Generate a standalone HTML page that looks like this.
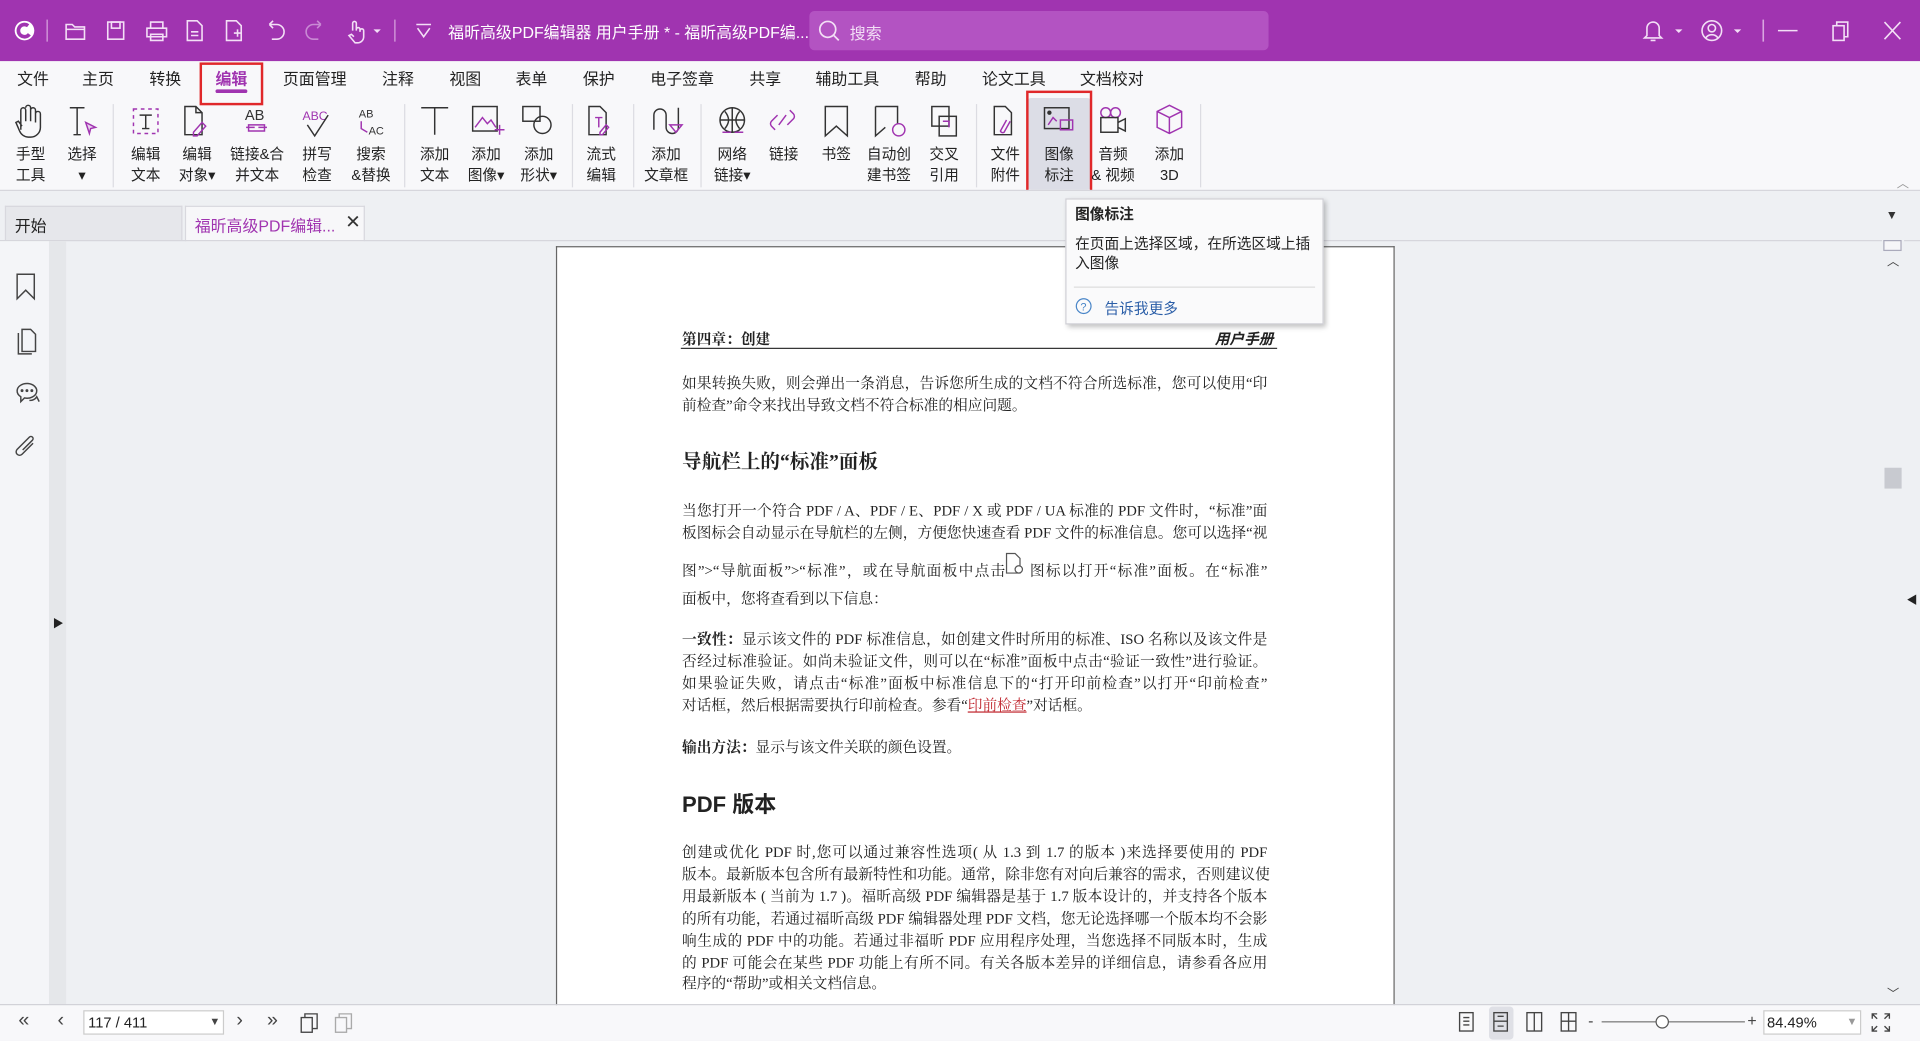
<!DOCTYPE html>
<html><head><meta charset="utf-8">
<style>
*{margin:0;padding:0;box-sizing:border-box}
html,body{width:1920px;height:1041px;overflow:hidden;background:#eef0f3}
#w{position:absolute;left:0;top:0;width:1568px;height:850px;transform:scale(1.22449);transform-origin:0 0;font-family:"Liberation Sans","Noto Sans CJK SC",sans-serif;color:#222;font-size:12px}
.a{position:absolute}
.t{position:absolute;white-space:nowrap}
svg{position:absolute;overflow:visible}
.rb{position:absolute;top:84px;width:50px;text-align:center;font-size:12px;line-height:17px;color:#222}
.rb .ic{height:32px;position:relative}
.rb .lb{margin-top:2px}
.sep{position:absolute;top:85px;width:1px;height:68px;background:#dcdce2}
.ln{position:absolute;left:557px;width:478px;height:18px;line-height:18px;font-size:12px;font-family:"Liberation Serif","Noto Serif CJK SC",serif;text-align:justify;text-align-last:justify;white-space:nowrap;color:#222}
.ln.l{text-align-last:left}
.mn{position:absolute;top:54px;font-size:13px;color:#222}
</style></head><body><div id="w">
<div class="a" style="left:0;top:0;width:1568px;height:50px;background:#a034b0"></div>
<svg style="left:10px;top:15px" width="20" height="20" viewBox="0 0 20 20"><circle cx="10" cy="10" r="8" fill="#fff"/><path d="M13 6a5 5 0 1 0 1 7" stroke="#a034b0" stroke-width="3" fill="none"/></svg>
<div class="a" style="left:38px;top:16px;width:1px;height:18px;background:#d9a6e0"></div>
<svg style="left:52px;top:15px" width="300" height="20" fill="none" stroke="#f3dff6" stroke-width="1.3">
<path d="M2 5h5l2 2h8v10H2z M2 9h15"/>
<rect x="36" y="3" width="13" height="14"/><rect x="39" y="3" width="7" height="5"/>
<path d="M68 8h16v7H68z M71 8V3h10v5 M71 13h10v5H71z"/>
<path d="M101 2h8l4 4v12h-12z M104 11h6 M104 14h6"/>
<path d="M133 2h8l4 4v12h-12z M139 12h6 M142 9v6"/>
<path d="M168 5h6a6 6 0 0 1 0 12h-4 M168 5l3-3 M168 5l3 3"/>
<path d="M210 5h-6a6 6 0 0 0 0 12h4 M210 5l-3-3 M210 5l-3 3" stroke="#c98ad4"/>
<path d="M236 10V4a1.5 1.5 0 0 1 3 0v6 M239 9a1.5 1.5 0 0 1 3 0v2 M242 10a1.5 1.5 0 0 1 3 0v5a5 5 0 0 1-5 5h-2l-5-6 2-1 2 2"/>
<path d="M253 9l3 3 3-3" fill="#f3dff6" stroke="none"/>
</svg>
<div class="a" style="left:322px;top:16px;width:1px;height:18px;background:#d9a6e0"></div>
<svg style="left:338px;top:17px" width="16" height="16" fill="none" stroke="#f3dff6" stroke-width="1.3"><path d="M2 3h12 M3 6l5 7 5-7"/></svg>
<div class="t" style="left:366px;top:16px;font-size:13px;color:#fff">福昕高级PDF编辑器 用户手册 * - 福昕高级PDF编...</div>
<div class="a" style="left:661px;top:9px;width:375px;height:32px;border-radius:4px;background:#b353c2"></div>
<svg style="left:668px;top:16px" width="18" height="18" fill="none" stroke="#f3dff6" stroke-width="1.4"><circle cx="8" cy="8" r="6.5"/><path d="M13 13l4 4"/></svg>
<div class="t" style="left:694px;top:17px;font-size:13px;color:#f3dff6">搜索</div>
<svg style="left:1340px;top:14px" width="230" height="22" fill="none" stroke="#f3dff6" stroke-width="1.3">
<path d="M5 15V9a5 5 0 0 1 10 0v6l2 2H3z M8 19h4"/><path d="M28 10l3 3 3-3" fill="#f3dff6" stroke="none"/>
<circle cx="58" cy="11" r="8"/><circle cx="58" cy="9" r="3"/><path d="M53 17a6 6 0 0 1 10 0"/><path d="M76 10l3 3 3-3" fill="#f3dff6" stroke="none"/>
<path d="M100 2v18" stroke="#d9a6e0"/>
<path d="M112 11h16"/>
<rect x="157" y="7" width="9" height="12"/><path d="M160 7V4h9v12h-3"/>
<path d="M199 4l13 14 M212 4l-13 14"/>
</svg>
<div class="a" style="left:0;top:50px;width:1568px;height:105px;background:#f8f8fa"></div>
<div class="mn" style="left:14px">文件</div><div class="mn" style="left:67px">主页</div><div class="mn" style="left:122px">转换</div>
<div class="mn" style="left:176px;color:#a034b0;font-weight:bold">编辑</div>
<div class="a" style="left:176px;top:73px;width:26px;height:3px;border-radius:2px;background:#a034b0"></div>
<div class="a" style="left:163px;top:51px;width:52px;height:35px;border:2px solid #e0282a"></div>
<div class="mn" style="left:231px">页面管理</div><div class="mn" style="left:312px">注释</div><div class="mn" style="left:367px">视图</div><div class="mn" style="left:421px">表单</div><div class="mn" style="left:476px">保护</div><div class="mn" style="left:531px">电子签章</div><div class="mn" style="left:612px">共享</div><div class="mn" style="left:666px">辅助工具</div><div class="mn" style="left:747px">帮助</div><div class="mn" style="left:802px">论文工具</div><div class="mn" style="left:882px">文档校对</div>
<div class="a" style="left:839px;top:80px;width:52px;height:75px;background:#dcdde6;border-radius:3px"></div>
<div class="a" style="left:838px;top:74px;width:54px;height:86px;border:2px solid #e0282a"></div>
<div class="sep" style="left:92px"></div><div class="sep" style="left:330px"></div><div class="sep" style="left:467px"></div><div class="sep" style="left:517px"></div><div class="sep" style="left:572px"></div><div class="sep" style="left:797px"></div><div class="sep" style="left:980px"></div>
<svg style="left:0;top:84px" width="1000" height="34" fill="none" stroke="#333" stroke-width="1.2">
<path d="M17 22V6a2 2 0 0 1 4 0v9 M21 4a2 2 0 0 1 4 0v11 M25 6a2 2 0 0 1 4 0v10 M29 9a2 2 0 0 1 4 0v11a8 8 0 0 1-8 8h-2a8 8 0 0 1-7-5l-3-7 2-1 3 4"/>
<path d="M57 4h12 M63 4v22 M60 26h6"/><path d="M70 16l8 4-4 1-1 4z" stroke="#a034b0" fill="#e8d0ee"/>
<rect x="109" y="5" width="20" height="20" stroke="#a034b0" stroke-dasharray="3 3"/><path d="M114 10h10 M119 10v11 M116 21h6"/>
<path d="M151 3h9l5 5v18h-14z M160 3v5h5"/><path d="M158 24l7-8 3 3-7 8h-3z" stroke="#a034b0"/>
<text x="200" y="14" font-size="12" fill="#333" stroke="none" font-family="Liberation Sans">AB</text><path d="M201 20h7 M211 20h7 M203 18h13v5H203z" stroke="#a034b0"/>
<text x="247" y="14" font-size="10" fill="#a034b0" stroke="none" font-family="Liberation Sans">ABC</text><path d="M251 18l6 9 11-17"/>
<text x="293" y="12" font-size="9" fill="#333" stroke="none" font-family="Liberation Sans">AB</text><text x="301" y="26" font-size="9" fill="#333" stroke="none" font-family="Liberation Sans">AC</text><path d="M295 15v6l5 3" stroke="#a034b0"/>
<path d="M344 4h22 M355 4v22"/>
<rect x="386" y="3" width="20" height="20"/><path d="M388 20l6-8 4 5 3-3 4 6" stroke="#a034b0"/><path d="M404 22h8 M408 18v8" stroke="#a034b0"/>
<rect x="427" y="3" width="14" height="12"/><circle cx="443" cy="18" r="7"/>
<path d="M481 3h9l5 5v18h-14z"/><path d="M486 12h6 M489 12v8" stroke="#a034b0"/><path d="M490 24l5-6 2 2-5 6h-2z" stroke="#a034b0"/>
<path d="M534 22V10a5 5 0 0 1 10 0v10 M544 20a5 5 0 0 0 10 0V4"/><path d="M547 18h10l-5 6z" stroke="#a034b0"/>
<circle cx="598" cy="14" r="10"/><path d="M588 14h20 M598 4v20 M592 7c4 5 4 9 0 14 M604 7c-4 5-4 9 0 14"/><path d="M590 24h7 M600 24h7" stroke="#a034b0"/>
<path d="M633 22l-3-3a3 3 0 0 1 0-4l5-5 M645 6l3 3a3 3 0 0 1 0 4l-5 5 M636 18l6-8" stroke="#a034b0"/>
<path d="M674 3h18v24l-9-8-9 8z"/>
<path d="M715 3h18v14 M715 3v24l8-7"/><circle cx="734" cy="22" r="5" stroke="#a034b0"/>
<rect x="761" y="3" width="14" height="16"/><rect x="767" y="11" width="14" height="16"/><path d="M770 15h5v5" stroke="#a034b0"/>
<path d="M812 3h9l5 5v18h-14z"/><path d="M822 14l-5 9a2 2 0 0 0 3 1l5-9" stroke="#a034b0"/>
<rect x="853" y="4" width="20" height="17"/><circle cx="857" cy="8" r="1.2" fill="#333"/><path d="M856 18l4-6 3 3" stroke="#a034b0"/><rect x="866" y="14" width="10" height="8" stroke="#a034b0"/>
<circle cx="903" cy="8" r="4" stroke="#a034b0"/><circle cx="911" cy="8" r="4" stroke="#a034b0"/><rect x="899" y="12" width="14" height="12"/><path d="M913 16l6-3v10l-6-3"/>
<path d="M955 2l10 5v13l-10 5-10-5V7z M945 7l10 5 10-5 M955 12v13" stroke="#a034b0"/>
</svg>
<div class="rb" style="left:0px"><div class="ic"></div><div class="lb">手型<br>工具</div></div>
<div class="rb" style="left:42px"><div class="ic"></div><div class="lb">选择<br>▾</div></div>
<div class="rb" style="left:94px"><div class="ic"></div><div class="lb">编辑<br>文本</div></div>
<div class="rb" style="left:136px"><div class="ic"></div><div class="lb">编辑<br>对象▾</div></div>
<div class="rb" style="left:180px;width:60px"><div class="ic"></div><div class="lb">链接&amp;合<br>并文本</div></div>
<div class="rb" style="left:234px"><div class="ic"></div><div class="lb">拼写<br>检查</div></div>
<div class="rb" style="left:278px"><div class="ic"></div><div class="lb">搜索<br>&amp;替换</div></div>
<div class="rb" style="left:330px"><div class="ic"></div><div class="lb">添加<br>文本</div></div>
<div class="rb" style="left:372px"><div class="ic"></div><div class="lb">添加<br>图像▾</div></div>
<div class="rb" style="left:415px"><div class="ic"></div><div class="lb">添加<br>形状▾</div></div>
<div class="rb" style="left:466px"><div class="ic"></div><div class="lb">流式<br>编辑</div></div>
<div class="rb" style="left:519px"><div class="ic"></div><div class="lb">添加<br>文章框</div></div>
<div class="rb" style="left:573px"><div class="ic"></div><div class="lb">网络<br>链接▾</div></div>
<div class="rb" style="left:615px"><div class="ic"></div><div class="lb">链接<br>&nbsp;</div></div>
<div class="rb" style="left:658px"><div class="ic"></div><div class="lb">书签<br>&nbsp;</div></div>
<div class="rb" style="left:699px;width:54px"><div class="ic"></div><div class="lb">自动创<br>建书签</div></div>
<div class="rb" style="left:746px"><div class="ic"></div><div class="lb">交叉<br>引用</div></div>
<div class="rb" style="left:796px"><div class="ic"></div><div class="lb">文件<br>附件</div></div>
<div class="rb" style="left:840px"><div class="ic"></div><div class="lb">图像<br>标注</div></div>
<div class="rb" style="left:884px"><div class="ic"></div><div class="lb">音频<br>&amp; 视频</div></div>
<div class="rb" style="left:930px"><div class="ic"></div><div class="lb">添加<br>3D</div></div>
<div class="t" style="left:1549px;top:141px;font-size:10px;color:#999">︿</div>
<div class="a" style="left:0;top:155px;width:1568px;height:1px;background:#d6d6dc"></div>
<div class="a" style="left:0;top:156px;width:1568px;height:40px;background:#eef0f3"></div>
<div class="a" style="left:4px;top:168px;width:145px;height:28px;background:#e6e7eb;border:1px solid #d8d8de;border-bottom:none"></div>
<div class="t" style="left:12px;top:174px;font-size:13px">开始</div>
<div class="a" style="left:151px;top:168px;width:147px;height:29px;background:#f7f7f9;border:1px solid #d8d8de;border-bottom:none"></div>
<div class="t" style="left:159px;top:174px;font-size:13px;color:#a034b0">福昕高级PDF编辑...</div>
<div class="t" style="left:282px;top:172px;font-size:15px;color:#333">✕</div>
<div class="t" style="left:1540px;top:171px;font-size:10px;color:#333">▼</div>
<div class="a" style="left:0;top:196px;width:1568px;height:1px;background:#d6d6dc"></div>
<div class="a" style="left:0;top:197px;width:40px;height:623px;background:#f4f5f8"></div>
<div class="a" style="left:40px;top:197px;width:14px;height:623px;background:#e5e7ea"></div>
<svg style="left:12px;top:222px" width="22" height="160" fill="none" stroke="#444" stroke-width="1.2">
<path d="M2 2h14v20l-7-7-7 7z"/>
<path d="M6 47h7l4 4v14H6z M3 50v17h11"/>
<path d="M2 97a8 6 0 1 1 6 6l-3 3v-4a8 6 0 0 1-3-5z M12 105a6 5 0 0 0 6-3l2 4"/><circle cx="6" cy="97" r=".6" fill="#444"/><circle cx="10" cy="97" r=".6" fill="#444"/><circle cx="14" cy="97" r=".6" fill="#444"/>
<path d="M15 140l-9 9a2.5 2.5 0 0 1-4-4l10-10a1.7 1.7 0 0 1 2.5 2.5l-8 8"/>
</svg>
<div class="t" style="left:43px;top:502px;font-size:9px;color:#222">▶</div>
<div class="a" style="left:454px;top:201px;width:685px;height:620px;background:#fff;border:1px solid #666;border-bottom:none"></div>
<div class="t" style="left:557px;top:268px;font-size:12px;font-weight:bold;font-family:'Liberation Serif','Noto Serif CJK SC',serif">第四章：创建</div>
<div class="t" style="left:992px;top:268px;font-size:12px;font-weight:bold;font-style:italic">用户手册</div>
<div class="a" style="left:556px;top:284px;width:487px;height:1px;background:#333"></div>
<div class="ln" style="top:304px">如果转换失败，则会弹出一条消息，告诉您所生成的文档不符合所选标准，您可以使用“印</div>
<div class="ln l" style="top:322px">前检查”命令来找出导致文档不符合标准的相应问题。</div>
<div class="t" style="left:557px;top:364px;font-size:16px;font-weight:bold;font-family:'Liberation Serif','Noto Serif CJK SC',serif">导航栏上的“标准”面板</div>
<div class="ln" style="top:408px">当您打开一个符合 PDF / A、PDF / E、PDF / X 或 PDF / UA 标准的 PDF 文件时，“标准”面</div>
<div class="ln" style="top:426px">板图标会自动显示在导航栏的左侧，方便您快速查看 PDF 文件的标准信息。您可以选择“视</div>
<div class="ln" style="top:457px">图”&gt;“导航面板”&gt;“标准”，或在导航面板中点击<span style="display:inline-block;width:18px"></span>图标以打开“标准”面板。在“标准”</div>
<svg style="left:820px;top:451px" width="18" height="20" fill="none" stroke="#555" stroke-width="1"><path d="M2 1h7l4 4v12H2z"/><circle cx="12" cy="14" r="3" fill="#fff"/></svg>
<div class="ln l" style="top:480px">面板中，您将查看到以下信息：</div>
<div class="ln" style="top:513px"><b>一致性：</b>显示该文件的 PDF 标准信息，如创建文件时所用的标准、ISO 名称以及该文件是</div>
<div class="ln" style="top:531px">否经过标准验证。如尚未验证文件，则可以在“标准”面板中点击“验证一致性”进行验证。</div>
<div class="ln" style="top:549px">如果验证失败，请点击“标准”面板中标准信息下的“打开印前检查”以打开“印前检查”</div>
<div class="ln l" style="top:567px">对话框，然后根据需要执行印前检查。参看“<span style="color:#c0262e;text-decoration:underline">印前检查</span>”对话框。</div>
<div class="ln l" style="top:601px"><b>输出方法：</b>显示与该文件关联的颜色设置。</div>
<div class="t" style="left:557px;top:643px;font-size:18px;font-weight:bold;font-family:'Liberation Sans','Noto Sans CJK SC',sans-serif">PDF 版本</div>
<div class="ln" style="top:687px">创建或优化 PDF 时,您可以通过兼容性选项( 从 1.3 到 1.7 的版本 )来选择要使用的 PDF</div>
<div class="ln" style="top:705px">版本。最新版本包含所有最新特性和功能。通常，除非您有对向后兼容的需求，否则建议使</div>
<div class="ln" style="top:723px">用最新版本 ( 当前为 1.7 )。福昕高级 PDF 编辑器是基于 1.7 版本设计的，并支持各个版本</div>
<div class="ln" style="top:741px">的所有功能，若通过福昕高级 PDF 编辑器处理 PDF 文档，您无论选择哪一个版本均不会影</div>
<div class="ln" style="top:759px">响生成的 PDF 中的功能。若通过非福昕 PDF 应用程序处理，当您选择不同版本时，生成</div>
<div class="ln" style="top:777px">的 PDF 可能会在某些 PDF 功能上有所不同。有关各版本差异的详细信息，请参看各应用</div>
<div class="ln l" style="top:794px">程序的“帮助”或相关文档信息。</div>
<div class="a" style="left:870px;top:162px;width:211px;height:103px;background:#fafafb;border:1px solid #d0d0d6;box-shadow:2px 2px 4px rgba(0,0,0,.25)"></div>
<div class="t" style="left:878px;top:166px;font-size:12px;font-weight:bold">图像标注</div>
<div class="t" style="left:878px;top:191px;font-size:12px;line-height:16px">在页面上选择区域，在所选区域上插<br>入图像</div>
<div class="a" style="left:877px;top:234px;width:197px;height:1px;background:#ddd"></div>
<svg style="left:878px;top:243px" width="14" height="14" fill="none" stroke="#4a86c8"><circle cx="7" cy="7" r="6"/><text x="4.3" y="10.5" font-size="9" fill="#4a86c8" stroke="none" font-family="Liberation Sans">?</text></svg>
<div class="t" style="left:902px;top:243px;font-size:12px;color:#2c5fa8">告诉我更多</div>
<div class="a" style="left:1537px;top:196px;width:18px;height:624px;background:#eef0f3"></div>
<div class="a" style="left:1538px;top:196px;width:15px;height:9px;border:1px solid #aab;background:#f6f6f8"></div>
<div class="t" style="left:1541px;top:205px;font-size:10px;color:#444">︿</div>
<div class="a" style="left:1539px;top:382px;width:14px;height:17px;background:#c8cad0"></div>
<div class="t" style="left:1541px;top:803px;font-size:10px;color:#444">﹀</div>
<div class="t" style="left:1557px;top:483px;font-size:9px;color:#222">◀</div>
<div class="a" style="left:0;top:820px;width:1568px;height:1px;background:#d0d0d6"></div>
<div class="a" style="left:0;top:821px;width:1568px;height:29px;background:#f8f8fa"></div>
<div class="t" style="left:15px;top:825px;font-size:16px;color:#444">«</div>
<div class="t" style="left:47px;top:825px;font-size:16px;color:#444">‹</div>
<div class="a" style="left:68px;top:825px;width:115px;height:20px;background:#fff;border:1px solid #ccc"></div>
<div class="t" style="left:72px;top:828px;font-size:12px">117 / 411</div>
<div class="t" style="left:171px;top:829px;font-size:9px;color:#444">▼</div>
<div class="t" style="left:193px;top:825px;font-size:16px;color:#444">›</div>
<div class="t" style="left:218px;top:825px;font-size:16px;color:#444">»</div>
<svg style="left:244px;top:827px" width="50" height="18" fill="none" stroke="#444" stroke-width="1.1"><rect x="2" y="4" width="9" height="12"/><path d="M5 4V1h10v12h-4"/><rect x="30" y="4" width="9" height="12" stroke="#aaa"/><path d="M33 4V1h10v12h-4" stroke="#aaa"/></svg>
<div class="a" style="left:1216px;top:822px;width:20px;height:27px;background:#dfe0e6;border-radius:3px"></div>
<svg style="left:1190px;top:826px" width="100" height="18" fill="none" stroke="#444" stroke-width="1.1">
<rect x="2" y="1" width="11" height="15"/><path d="M5 5h5 M5 8h5 M5 11h5"/>
<rect x="30" y="1" width="11" height="15"/><path d="M30 8h11 M33 4h5 M33 12h5"/>
<rect x="57" y="1" width="12" height="15"/><path d="M63 1v15"/>
<rect x="85" y="1" width="12" height="15"/><path d="M91 1v15 M85 8h12"/></svg>
<div class="t" style="left:1297px;top:826px;font-size:13px;color:#444">-</div>
<div class="a" style="left:1308px;top:834px;width:117px;height:1px;background:#777"></div>
<div class="a" style="left:1352px;top:829px;width:11px;height:11px;border-radius:50%;background:#fff;border:1px solid #555"></div>
<div class="t" style="left:1427px;top:826px;font-size:13px;color:#444">+</div>
<div class="a" style="left:1440px;top:825px;width:80px;height:20px;background:#fff;border:1px solid #ccc"></div>
<div class="t" style="left:1443px;top:828px;font-size:12px">84.49%</div>
<div class="t" style="left:1508px;top:829px;font-size:9px;color:#999">▼</div>
<svg style="left:1528px;top:827px" width="16" height="16" fill="none" stroke="#444" stroke-width="1.1"><path d="M1 5V1h4 M11 1h4v4 M15 11v4h-4 M5 15H1v-4 M1 1l4 4 M15 1l-4 4 M15 15l-4-4 M1 15l4-4"/></svg>
</div></body></html>
